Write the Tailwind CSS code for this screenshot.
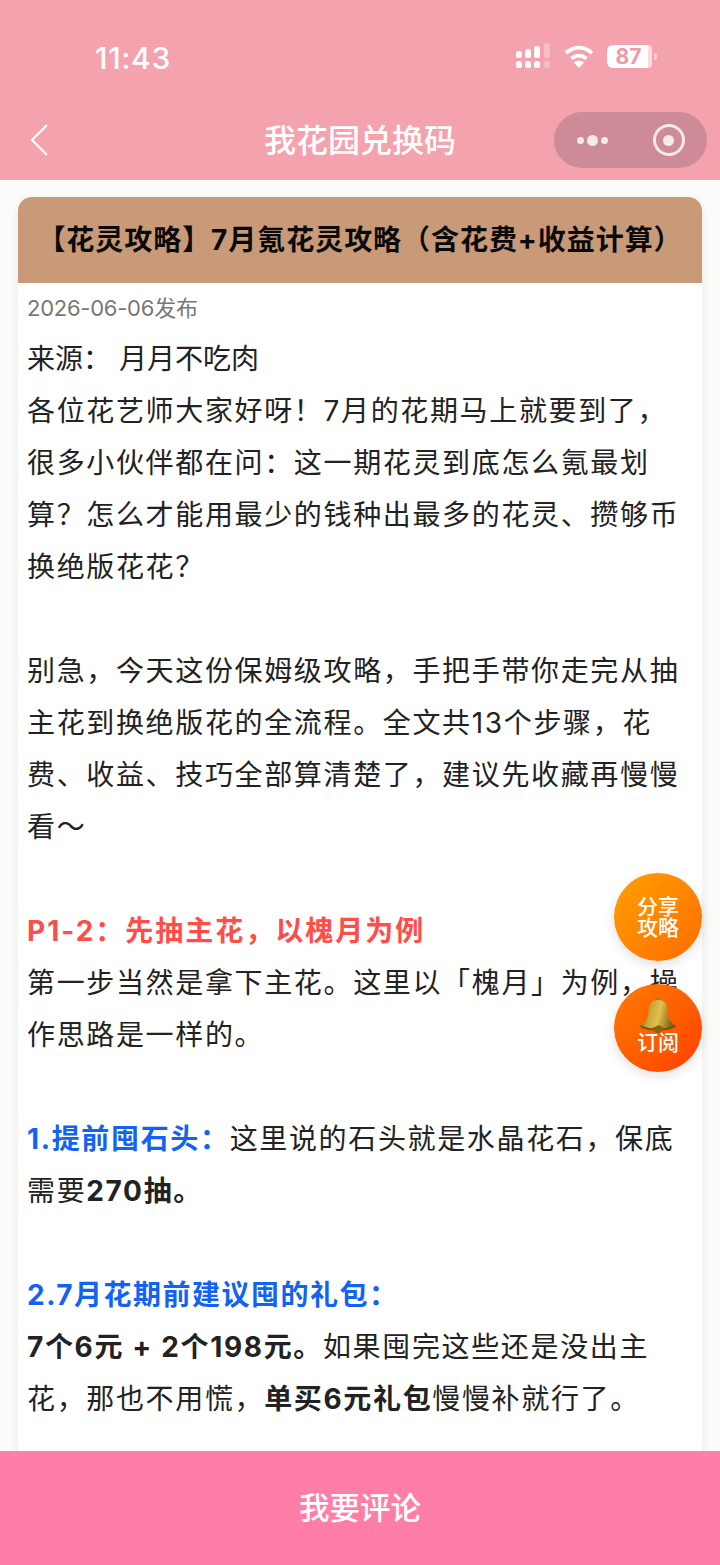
<!DOCTYPE html>
<html lang="zh-CN">
<head>
    <meta charset="UTF-8">
    <title>我花园兑换码</title>
    <script src="https://cdn.jsdelivr.net/npm/@tailwindcss/browser@4"></script>
</head>
<body class="font-['Inter','Noto_Sans_CJK_SC',sans-serif]">
<div class="relative w-[720px] h-[1565px] overflow-hidden flex flex-col bg-[#fbfbf9]">

    <!-- status bar + nav -->
    <header class="h-[180px] shrink-0 bg-[#f4a3ae] text-white">
        <div class="h-[112px] pt-[39px] pl-[95px] pr-[63px] flex items-start justify-between">
            <span class="text-[30px] leading-[38px] font-medium tracking-[0.7px]">11:43</span>
            <div class="flex items-start gap-[13px] pt-[6px]">
                <svg class="-mt-[2px]" width="36" height="26" viewBox="0 0 36 26" fill="#fff">
                    <rect x="1" y="8" width="6" height="7" rx="2.500"/><rect x="1" y="18" width="6" height="7" rx="2.500"/>
                    <rect x="10" y="6" width="6" height="9" rx="2.500"/><rect x="10" y="18" width="6" height="7" rx="2.500"/>
                    <rect x="19" y="3" width="6" height="12" rx="2.500"/><rect x="19" y="18" width="6" height="7" rx="2.500"/>
                    <rect x="29" y="0" width="6" height="15" rx="2.500" opacity=".3"/><rect x="29" y="18" width="6" height="7" rx="2.500" opacity=".3"/>
                </svg>
                <svg width="30" height="23" viewBox="0 0 30 23" fill="none" stroke="#fff" stroke-width="3.800">
                    <path d="M2 8C10 0.800 20 0.800 28 8"/><path d="M7.500 13.500C12 9.800 18 9.800 22.500 13.500"/>
                    <path d="M15 23l-5-5.500c3-2.500 7-2.500 10 0z" fill="#fff" stroke="none"/>
                </svg>
                <div class="flex items-center h-[23px]">
                    <div class="w-[41px] h-[23px] rounded-l-[6px] bg-white text-[#ee9aa6] text-[21px] leading-[23px] font-bold flex items-center justify-center pl-[2px]">87</div>
                    <div class="w-[4px] h-[23px] rounded-r-[6px] bg-white/60"></div>
                    <div class="w-[3px] h-[7px] ml-[2px] rounded-r-full bg-white/50"></div>
                </div>
            </div>
        </div>
        <div class="relative h-[68px] flex items-center justify-center">
            <svg class="absolute left-[28px] top-[11px]" width="22" height="34" viewBox="0 0 22 34" fill="none" stroke="#fff" stroke-width="2.300"><path d="M19 2L4 17l15 15"/></svg>
            <span class="text-[32px] font-medium leading-[40px] -mt-[11px]">我花园兑换码</span>
            <div class="absolute left-[554px] top-[0px] w-[153px] h-[56px] rounded-full bg-[#cc8b96] flex items-center">
                <div class="w-[76px] h-full border-r border-[#c98893] flex items-center justify-center gap-[3px] pl-[1px]">
                    <span class="w-[7px] h-[7px] rounded-full bg-[#f6e9e9]"></span>
                    <span class="w-[11px] h-[11px] rounded-full bg-[#f6e9e9]"></span>
                    <span class="w-[7px] h-[7px] rounded-full bg-[#f6e9e9]"></span>
                </div>
                <div class="w-[77px] flex items-center justify-center">
                    <div class="w-[32px] h-[32px] rounded-full border-[3.500px] border-[#f6e9e9] flex items-center justify-center">
                        <div class="w-[11px] h-[11px] rounded-full bg-[#f6e9e9]"></div>
                    </div>
                </div>
            </div>
        </div>
    </header>

    <!-- article -->
    <main class="flex-1 min-h-0 overflow-hidden pt-[17px] px-[18px]">
        <article class="bg-white rounded-t-[14px] shadow-[0_2px_10px_rgba(0,0,0,0.07)] h-[1300px]">
            <h1 class="h-[86px] rounded-t-[14px] bg-[#c99a78] text-[#0a0a0a] text-[28px] font-bold flex items-center justify-center whitespace-nowrap tracking-[0.95px]">【花灵攻略】7月氪花灵攻略（含花费+收益计算）</h1>
            <div class="pl-[9px] pt-[9px] whitespace-nowrap">
                <p class="text-[22px] leading-[32px] text-[#777] tracking-[-0.25px]">2026-06-06发布</p>
                <div class="text-[28px] leading-[52px] tracking-[1.65px] text-[#222] mt-[9px]">
                    <p class="tracking-normal">来源： 月月不吃肉</p>
                    <p>各位花艺师大家好呀！7月的花期马上就要到了，</p>
                    <p>很多小伙伴都在问：这一期花灵到底怎么氪最划</p>
                    <p>算？怎么才能用最少的钱种出最多的花灵、攒够币</p>
                    <p>换绝版花花？</p>
                    <p class="h-[52px]"></p>
                    <p>别急，今天这份保姆级攻略，手把手带你走完从抽</p>
                    <p>主花到换绝版花的全流程。全文共13个步骤，花</p>
                    <p>费、收益、技巧全部算清楚了，建议先收藏再慢慢</p>
                    <p>看～</p>
                    <p class="h-[52px]"></p>
                    <p class="font-bold text-[#ff4d4a] tracking-[2px]">P1-2：先抽主花，以槐月为例</p>
                    <p>第一步当然是拿下主花。这里以「槐月」为例，操</p>
                    <p>作思路是一样的。</p>
                    <p class="h-[52px]"></p>
                    <p><strong class="text-[#1263f1]">1.提前囤石头：</strong>这里说的石头就是水晶花石，保底</p>
                    <p>需要<strong>270抽。</strong></p>
                    <p class="h-[52px]"></p>
                    <p class="font-bold text-[#1263f1] tracking-[1.5px]">2.7月花期前建议囤的礼包：</p>
                    <p><strong>7个6元 + 2个198元。</strong>如果囤完这些还是没出主</p>
                    <p>花，那也不用慌，<strong>单买6元礼包</strong>慢慢补就行了。</p>
                </div>
            </div>
        </article>
    </main>

    <!-- comment bar -->
    <footer class="h-[114px] shrink-0 bg-[#ff7ea8] text-white text-[30.500px] font-medium flex items-center justify-center relative">我要评论</footer>

    <!-- floating buttons -->
    <div class="absolute left-[614px] top-[873px] w-[88px] h-[88px] rounded-full bg-gradient-to-br from-[#ffa000] to-[#ff6a00] shadow-[0_4px_12px_rgba(0,0,0,0.12)] text-white text-[21px] leading-[21px] font-medium flex flex-col items-center justify-center">
        <span>分享</span><span>攻略</span>
    </div>
    <div class="absolute left-[614px] top-[984px] w-[88px] h-[88px] rounded-full bg-gradient-to-br from-[#ff7a00] to-[#ff3d00] shadow-[0_4px_12px_rgba(0,0,0,0.12)] text-white text-[21px] leading-[24px] font-medium flex flex-col items-center">
        <svg class="mt-[13px]" width="40" height="37" viewBox="0 0 38 37">
            <defs>
                <linearGradient id="bell" x1="0" y1="0" x2="1" y2="0.200">
                    <stop offset="0" stop-color="#6f5210"/><stop offset="0.350" stop-color="#c9a838"/><stop offset="0.600" stop-color="#e0c050"/><stop offset="1" stop-color="#80610f"/>
                </linearGradient>
            </defs>
            <circle cx="19" cy="2.500" r="2" fill="#a77d1c"/>
            <path d="M19 3C11 3 9.500 9 9.500 15c0 6-3 10.500-8.500 14 5 3 11 3.500 18 3.500s13-.5 18-3.500c-5.500-3.500-8.500-8-8.500-14 0-6-1.500-12-9.500-12z" fill="url(#bell)"/>
            <path d="M1.500 29c5 3 11 3.500 17.500 3.500s12.500-.5 17.500-3.500" fill="none" stroke="#6e4f0c" stroke-width="1.500"/>
            <path d="M13 31l7-3 5 3-4 5h-4z" fill="#8a6412"/>
        </svg>
        <span class="-mt-[3px]">订阅</span>
    </div>
</div>
</body>
</html>
